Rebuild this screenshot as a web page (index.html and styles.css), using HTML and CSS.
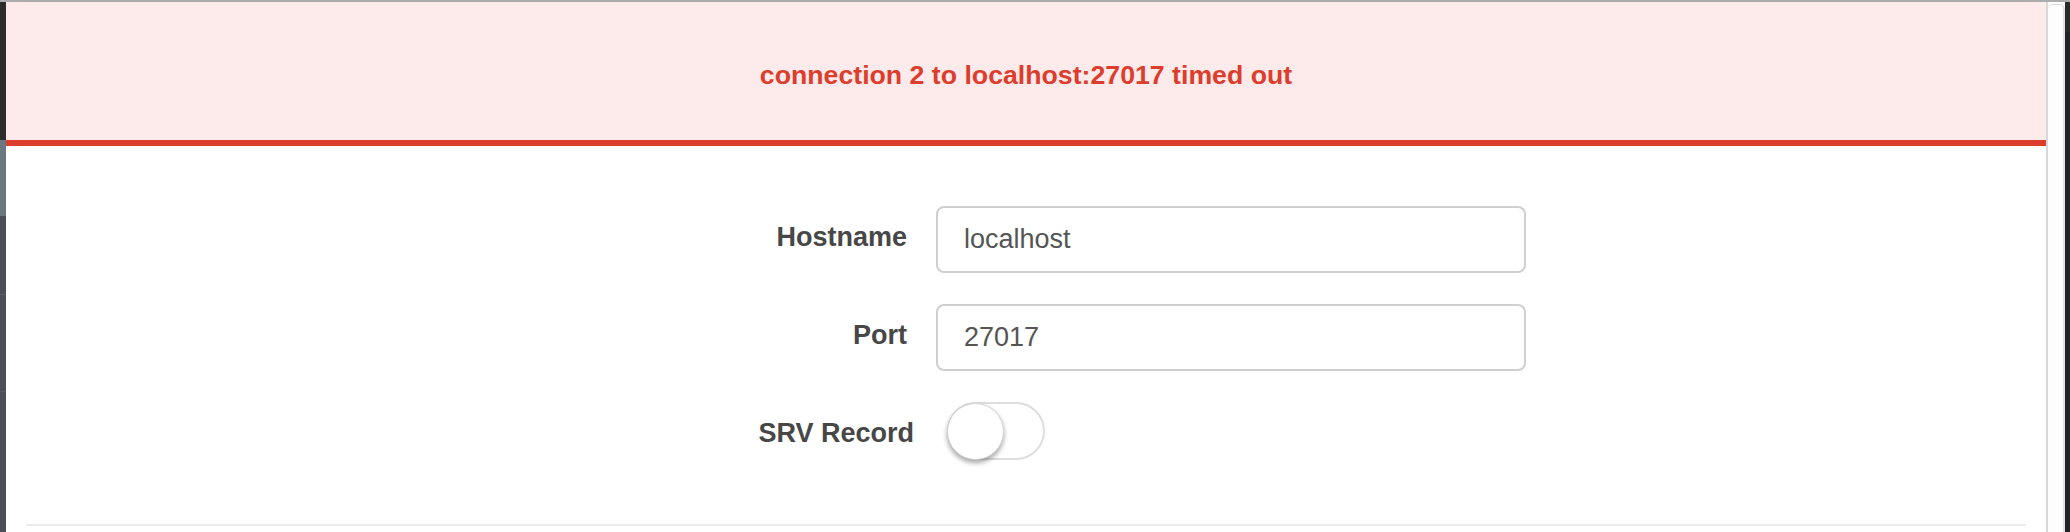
FILE: index.html
```html
<!DOCTYPE html>
<html lang="en">
<head>
<meta charset="utf-8">
<title>Connect</title>
<link rel="stylesheet" href="styles.css">
</head>
<body>
<div class="topline"></div>
<div class="frame">
  <div class="edge">
    <div class="edge-dark"></div>
    <div class="edge-active"></div>
    <div class="edge-item"></div>
    <div class="edge-item"></div>
    <div class="edge-item edge-last"></div>
  </div>
  <main class="main">
    <div class="banner">connection 2 to localhost:27017 timed out</div>
    <form class="form">
      <label class="label" for="host">Hostname</label>
      <input class="input" id="host" type="text" value="localhost" readonly>
      <label class="label" for="port">Port</label>
      <input class="input" id="port" type="text" value="27017" readonly>
      <label class="label label-srv">SRV Record</label>
      <div class="toggle-cell">
        <span class="toggle"><span class="knob"></span></span>
      </div>
    </form>
    <hr class="divider">
  </main>
  <div class="rail">
    <div class="track"></div>
    <div class="rail-dark"></div>
  </div>
</div>
</body>
</html>
```
FILE: styles.css
```css
html, body {
  margin: 0;
  padding: 0;
  height: 532px;
  overflow: hidden;
  background: #ffffff;
  font-family: "Liberation Sans", Arial, sans-serif;
}

.topline {
  height: 2px;
  background: #acacac;
}

.frame {
  display: flex;
  height: 530px;
}

.edge {
  width: 6px;
  display: flex;
  flex-direction: column;
  flex-shrink: 0;
}
.edge-dark { height: 138px; background: #2c2c2c; }
.edge-active { height: 76px; background: #6d7782; }
.edge-item { height: 78px; background: #4b4f58; border-bottom: 1px solid #585c64; }
.edge-item + .edge-item { height: 96px; }
.edge-last { flex: 1; border-bottom: none; }

.main {
  flex: 1;
  display: flex;
  flex-direction: column;
}

.banner {
  background: #fdebeb;
  border-bottom: 6px solid #dc3d2d;
  color: #dc3d2d;
  font-weight: bold;
  font-size: 26.7px;
  line-height: 32px;
  text-align: center;
  padding: 57px 0 49px;
}

.form {
  display: grid;
  grid-template-columns: 901px 590px;
  column-gap: 29px;
  row-gap: 31px;
  padding-top: 60px;
}

.label {
  justify-self: end;
  font-weight: bold;
  font-size: 27px;
  line-height: 32px;
  color: #474747;
  padding-top: 15px;
}

.label-srv {
  padding-top: 15px;
  margin-right: -7px;
}

.input {
  box-sizing: border-box;
  height: 67px;
  width: 590px;
  margin: 0;
  border: 2px solid #cfcfcf;
  border-radius: 8px;
  padding: 0 26px;
  font-family: "Liberation Sans", Arial, sans-serif;
  font-size: 27px;
  color: #555555;
  background: #ffffff;
  outline: none;
}

.toggle-cell {
  padding-left: 11px;
}

.toggle {
  box-sizing: border-box;
  display: flex;
  align-items: center;
  width: 98px;
  height: 58px;
  border: 2px solid #dedede;
  border-radius: 29px;
  background: #ffffff;
}

.knob {
  box-sizing: border-box;
  width: 57px;
  height: 57px;
  margin-left: -2px;
  border-radius: 50%;
  background: #ffffff;
  border: 1px solid #d4d4d4;
  box-shadow: 0 3px 5px rgba(0, 0, 0, 0.35);
}

.divider {
  margin: 64px 20px 0;
  border: none;
  height: 2px;
  background: #ebebeb;
}

.rail {
  width: 24px;
  flex-shrink: 0;
  display: flex;
  border-left: 2px solid #d8d8d8;
  box-sizing: border-box;
}

.track {
  width: 15px;
  margin-top: 2px;
  background: #fdfdfd;
  border-right: 2px solid #e2e2e2;
  border-top: 1px solid #dcdcdc;
  border-top-left-radius: 5px;
  border-top-right-radius: 5px;
}

.rail-dark {
  flex: 1;
  background: linear-gradient(#2a2a2a 0 30px, #222327 30px);
}
```
